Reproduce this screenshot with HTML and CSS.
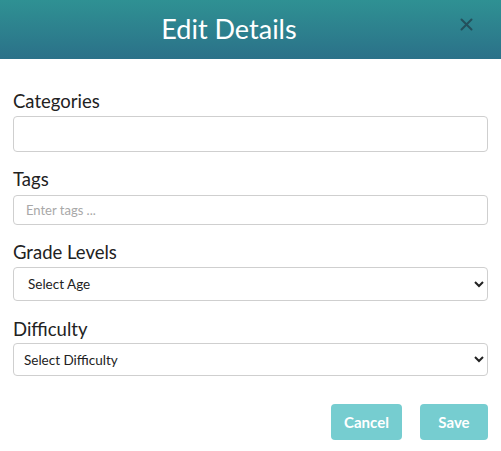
FILE: index.html
```html
<!DOCTYPE html>
<html lang="en">
<head>
<meta charset="utf-8">
<title>Edit Details</title>
<link rel="stylesheet" href="styles.css">
</head>
<body>
<div class="modal">
  <header class="modal-header">
    <h1 class="modal-title">Edit Details</h1>
    <button class="close-btn" type="button" aria-label="Close">
      <svg width="13" height="13" viewBox="0 0 13 13"><path d="M1.5 1.5 L11.5 11.5 M11.5 1.5 L1.5 11.5" stroke="#24505c" stroke-width="2" stroke-linecap="round"/></svg>
    </button>
  </header>
  <form class="modal-body">
    <div class="field field-first">
      <label class="field-label">Categories</label>
      <input class="control control-lg" type="text">
    </div>
    <div class="field">
      <label class="field-label label-tags">Tags</label>
      <input class="control control-sm" type="text" placeholder="Enter tags ...">
    </div>
    <div class="field">
      <label class="field-label">Grade Levels</label>
      <select class="control control-select select-age"><option>Select Age</option></select>
    </div>
    <div class="field field-last">
      <label class="field-label label-last">Difficulty</label>
      <select class="control control-select select-diff"><option>Select Difficulty</option></select>
    </div>
    <div class="actions">
      <button class="btn" type="button">Cancel</button>
      <button class="btn btn-save" type="button">Save</button>
    </div>
  </form>
</div>
</body>
</html>
```
FILE: styles.css
```css
html, body {
  margin: 0;
  padding: 0;
  background: #ffffff;
}
body {
  font-family: "Lato", "Noto Sans", sans-serif;
  color: #222;
}
.modal {
  width: 501px;
  min-height: 451px;
  background: #fff;
}
.modal-header {
  height: 59px;
  display: flex;
  align-items: center;
  padding: 0 13px;
  box-sizing: border-box;
  background: linear-gradient(#2f9193, #2b7189);
}
.modal-title {
  flex: 1;
  margin: 0;
  text-align: center;
  color: #fff;
  font-size: 27px;
  font-weight: 400;
  line-height: 1;
  padding-bottom: 2px;
}
.close-btn {
  width: 43px;
  height: 30px;
  border: 0;
  background: transparent;
  padding: 0;
  display: flex;
  align-items: center;
  justify-content: center;
  margin-top: -10px;
}
.modal-body {
  padding: 0 13px;
  display: flex;
  flex-direction: column;
}
.field {
  display: flex;
  flex-direction: column;
  margin-top: 17px;
}
.field-first { margin-top: 32px; }
.field-last { margin-top: 18px; }
.field-label {
  font-size: 18.5px;
  line-height: 20px;
  color: #222;
  margin-bottom: 5px;
}
.label-tags { margin-bottom: 6px; }
.label-last { margin-bottom: 4px; }
.control {
  box-sizing: border-box;
  width: 100%;
  border: 1px solid #cfcfcf;
  border-radius: 4px;
  background: #fff;
  font-family: "Lato", "Noto Sans", sans-serif;
  font-size: 13px;
  color: #333;
  margin: 0;
  outline: none;
}
.control-lg { height: 36px; }
.control-sm { height: 30px; padding: 0 12px; }
.control-sm::placeholder { color: #a8a8a8; }
.control-select { height: 34px; font-size: 13.5px; color: #222; }
.select-age { padding: 0 10px; }
.select-diff { height: 33px; padding: 0 6px; }
.actions {
  display: flex;
  justify-content: flex-end;
  gap: 18px;
  margin-top: 28px;
}
.btn {
  height: 36px;
  width: 71px;
  border: 0;
  border-radius: 4px;
  background: #76cdd0;
  color: #fff;
  font-family: "Lato", "Noto Sans", sans-serif;
  font-weight: 700;
  font-size: 15px;
  padding: 0;
}
.btn-save { width: 68px; }
```
